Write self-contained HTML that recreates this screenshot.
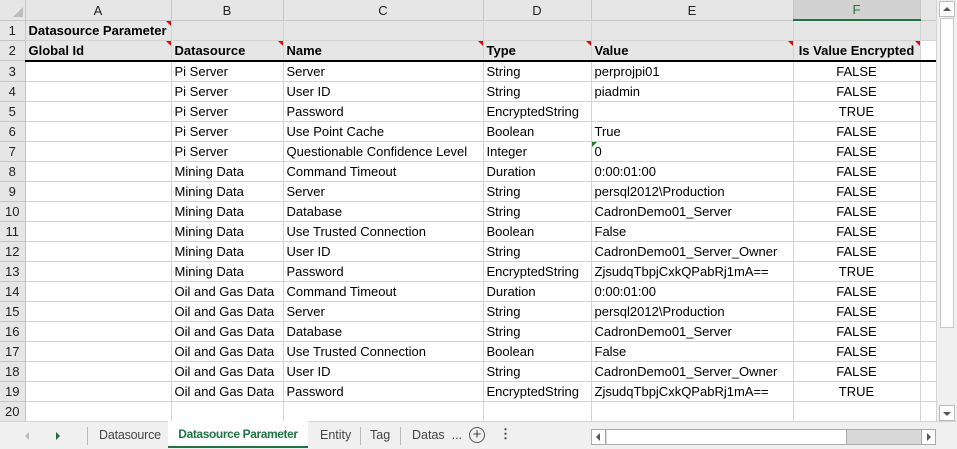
<!DOCTYPE html><html><head><style>
*{margin:0;padding:0;box-sizing:border-box}
body{width:957px;height:449px;overflow:hidden;background:#fff;font-family:"Liberation Sans",sans-serif;font-size:13px;color:#000;position:relative}
table{border-collapse:collapse;table-layout:fixed;position:absolute;left:0;top:0}
td{height:20px;border-right:1px solid #d4d4d4;border-bottom:1px solid #d4d4d4;padding:0 3px;white-space:nowrap;overflow:hidden;vertical-align:bottom;line-height:19px;position:relative}
tr.h td{background:#e6e6e6;text-align:center;color:#222;border-right:1px solid #c6c6c6;border-bottom:1px solid #c6c6c6;font-size:13px}
td.rn{background:#e6e6e6;text-align:center;color:#222;padding:0;border-right:1px solid #c6c6c6;border-bottom:1px solid #c6c6c6}
tr.gr td:not(.rn){background:#e7e6e6;font-weight:bold}
tr.r2 td{border-bottom:2px solid #000}
tr.r2 td.rn{border-bottom:1px solid #c6c6c6}
.c{text-align:center}
.tri{position:absolute;right:0;top:0;width:0;height:0;border-top:5px solid #e00;border-left:5px solid transparent}
.gtri{position:absolute;left:0;top:0;width:0;height:0;border-top:5px solid #1e7a1e;border-right:5px solid transparent}
.t{position:absolute;top:6px;font-size:12.5px;color:#444}
</style></head><body>
<table>
<colgroup><col style="width:25px"><col style="width:146px"><col style="width:112px"><col style="width:200px"><col style="width:108px"><col style="width:202px"><col style="width:127px"><col style="width:16px"></colgroup>
<tr class="h"><td style="position:relative"><div style="position:absolute;right:2px;bottom:3px;border-bottom:10px solid #bdbdbd;border-left:10px solid transparent"></div></td><td>A</td><td>B</td><td>C</td><td>D</td><td>E</td><td style="color:#217346;background:#d2d2d2;border-bottom:2px solid #217346">F</td><td></td></tr>
<tr class="gr"><td class="rn">1</td><td>Datasource Parameter<span class="tri"></span></td><td></td><td></td><td></td><td></td><td></td><td></td></tr>
<tr class="gr r2"><td class="rn">2</td><td>Global Id<span class="tri"></span></td><td>Datasource<span class="tri"></span></td><td>Name<span class="tri"></span></td><td>Type<span class="tri"></span></td><td>Value<span class="tri"></span></td><td class="c">Is Value Encrypted<span class="tri"></span></td><td style="background:#fff"></td></tr>
<tr><td class="rn">3</td><td></td><td>Pi Server</td><td>Server</td><td>String</td><td>perprojpi01</td><td class="c">FALSE</td><td></td></tr>
<tr><td class="rn">4</td><td></td><td>Pi Server</td><td>User ID</td><td>String</td><td>piadmin</td><td class="c">FALSE</td><td></td></tr>
<tr><td class="rn">5</td><td></td><td>Pi Server</td><td>Password</td><td>EncryptedString</td><td></td><td class="c">TRUE</td><td></td></tr>
<tr><td class="rn">6</td><td></td><td>Pi Server</td><td>Use Point Cache</td><td>Boolean</td><td>True</td><td class="c">FALSE</td><td></td></tr>
<tr><td class="rn">7</td><td></td><td>Pi Server</td><td>Questionable Confidence Level</td><td>Integer</td><td><span class="gtri"></span>0</td><td class="c">FALSE</td><td></td></tr>
<tr><td class="rn">8</td><td></td><td>Mining Data</td><td>Command Timeout</td><td>Duration</td><td>0:00:01:00</td><td class="c">FALSE</td><td></td></tr>
<tr><td class="rn">9</td><td></td><td>Mining Data</td><td>Server</td><td>String</td><td>persql2012\Production</td><td class="c">FALSE</td><td></td></tr>
<tr><td class="rn">10</td><td></td><td>Mining Data</td><td>Database</td><td>String</td><td>CadronDemo01_Server</td><td class="c">FALSE</td><td></td></tr>
<tr><td class="rn">11</td><td></td><td>Mining Data</td><td>Use Trusted Connection</td><td>Boolean</td><td>False</td><td class="c">FALSE</td><td></td></tr>
<tr><td class="rn">12</td><td></td><td>Mining Data</td><td>User ID</td><td>String</td><td>CadronDemo01_Server_Owner</td><td class="c">FALSE</td><td></td></tr>
<tr><td class="rn">13</td><td></td><td>Mining Data</td><td>Password</td><td>EncryptedString</td><td>ZjsudqTbpjCxkQPabRj1mA==</td><td class="c">TRUE</td><td></td></tr>
<tr><td class="rn">14</td><td></td><td>Oil and Gas Data</td><td>Command Timeout</td><td>Duration</td><td>0:00:01:00</td><td class="c">FALSE</td><td></td></tr>
<tr><td class="rn">15</td><td></td><td>Oil and Gas Data</td><td>Server</td><td>String</td><td>persql2012\Production</td><td class="c">FALSE</td><td></td></tr>
<tr><td class="rn">16</td><td></td><td>Oil and Gas Data</td><td>Database</td><td>String</td><td>CadronDemo01_Server</td><td class="c">FALSE</td><td></td></tr>
<tr><td class="rn">17</td><td></td><td>Oil and Gas Data</td><td>Use Trusted Connection</td><td>Boolean</td><td>False</td><td class="c">FALSE</td><td></td></tr>
<tr><td class="rn">18</td><td></td><td>Oil and Gas Data</td><td>User ID</td><td>String</td><td>CadronDemo01_Server_Owner</td><td class="c">FALSE</td><td></td></tr>
<tr><td class="rn">19</td><td></td><td>Oil and Gas Data</td><td>Password</td><td>EncryptedString</td><td>ZjsudqTbpjCxkQPabRj1mA==</td><td class="c">TRUE</td><td></td></tr>
<tr><td class="rn">20</td><td></td><td></td><td></td><td></td><td></td><td></td><td></td></tr>
</table>
<div style="position:absolute;left:936px;top:0;width:21px;height:421px;background:#f0f0f0;border-left:1px solid #d4d4d4"></div>
<div style="position:absolute;left:939px;top:1px;width:16px;height:16px;background:#fff;border:1px solid #bbb"><div style="position:absolute;left:3px;top:5px;border-bottom:4px solid #555;border-left:4px solid transparent;border-right:4px solid transparent"></div></div>
<div style="position:absolute;left:940px;top:18px;width:14px;height:310px;background:#fff;border:1px solid #c8c8c8"></div>
<div style="position:absolute;left:939px;top:405px;width:16px;height:16px;background:#fff;border:1px solid #bbb"><div style="position:absolute;left:3px;top:6px;border-top:4px solid #555;border-left:4px solid transparent;border-right:4px solid transparent"></div></div>
<div style="position:absolute;left:0;top:421px;width:957px;height:28px;background:#f0f0f0;border-top:1px solid #d4d4d4;color:#444">
<div style="position:absolute;left:25px;top:10px;border-right:4px solid #bbb;border-top:4px solid transparent;border-bottom:4px solid transparent"></div>
<div style="position:absolute;left:56px;top:10px;border-left:4px solid #1e6b3c;border-top:4px solid transparent;border-bottom:4px solid transparent"></div>
<div style="position:absolute;left:87px;top:5px;width:1px;height:18px;background:#bbb"></div>
<div class="t" style="left:99px;letter-spacing:-0.2px">Datasource</div>
<div style="position:absolute;left:168px;top:-1px;width:140px;height:27px;background:#fff;border-bottom:2px solid #217346;color:#217346;font-weight:bold;text-align:center;line-height:26px;font-size:12px;letter-spacing:-0.4px">Datasource Parameter</div>
<div class="t" style="left:320px">Entity</div>
<div style="position:absolute;left:360px;top:5px;width:1px;height:18px;background:#bbb"></div>
<div class="t" style="left:370px">Tag</div>
<div style="position:absolute;left:400px;top:5px;width:1px;height:18px;background:#bbb"></div>
<div class="t" style="left:412px">Datas&nbsp;&nbsp;...</div>
<div style="position:absolute;left:469px;top:5px;width:16px;height:16px;border:1.5px solid #555;border-radius:50%;text-align:center;line-height:13px;font-size:15px;color:#444">+</div>
<div style="position:absolute;left:499px;top:4px;font-weight:bold">&#8942;</div>
<div style="position:absolute;left:591px;top:7px;width:345px;height:16px;background:#d8d8d8;border:1px solid #aaa"></div>
<div style="position:absolute;left:592px;top:8px;width:14px;height:14px;background:#fff;border-right:1px solid #aaa"><div style="position:absolute;left:4px;top:3px;border-right:4px solid #555;border-top:4px solid transparent;border-bottom:4px solid transparent"></div></div>
<div style="position:absolute;left:607px;top:8px;width:240px;height:14px;background:#fff;border-right:1px solid #aaa"></div>
<div style="position:absolute;left:921px;top:8px;width:14px;height:14px;background:#fff;border-left:1px solid #aaa"><div style="position:absolute;left:5px;top:3px;border-left:4px solid #555;border-top:4px solid transparent;border-bottom:4px solid transparent"></div></div>
</div>
</body></html>
